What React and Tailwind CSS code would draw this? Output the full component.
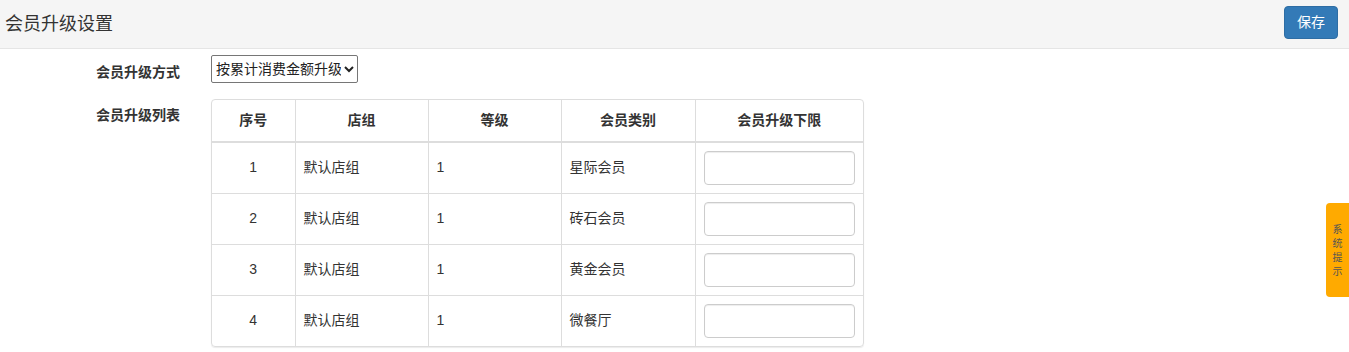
import React from 'react';

const ROWS = [
    { no: 1, group: '默认店组', level: '1', type: '星际会员' },
    { no: 2, group: '默认店组', level: '1', type: '砖石会员' },
    { no: 3, group: '默认店组', level: '1', type: '黄金会员' },
    { no: 4, group: '默认店组', level: '1', type: '微餐厅' },
];

const font = { fontFamily: '"Microsoft YaHei", "Liberation Sans", "Noto Sans CJK SC", sans-serif' };

export default function App() {
    return (
        <div className="relative w-[1349px] h-[352px] bg-white text-[#333] overflow-hidden" style={font}>
            {/* Header */}
            <div className="h-[49px] bg-[#f5f5f5] border-b border-[#e5e5e5] flex items-center justify-between pl-[5px] pr-[11px]">
                <h1 className="text-[18px] leading-none font-normal">会员升级设置</h1>
                <button className="w-[54px] h-[33px] bg-[#337ab7] border border-[#2e6da4] rounded-[4px] text-white text-[14px] mb-[4px]">
                    保存
                </button>
            </div>

            {/* Upgrade mode */}
            <div className="flex items-start mt-[6px] h-[28px]">
                <div className="w-[180px] text-right text-[14px] leading-[20px] font-bold pt-[7px]">会员升级方式</div>
                <select className="ml-[31px] w-[147px] h-[28px] border border-[#767676] rounded-[2px] text-[14px] pl-0 bg-white text-[#222]">
                    <option>按累计消费金额升级</option>
                    <option>按累计积分升级</option>
                </select>
            </div>

            {/* Upgrade list */}
            <div className="flex mt-[16px]">
                <div className="w-[180px] text-right text-[14px] leading-[20px] font-bold pt-[6px]">会员升级列表</div>
                <div className="ml-[31px] w-[653px] border border-[#ddd] rounded-[4px] overflow-hidden shadow-[0_1px_1px_rgba(0,0,0,0.08)]">
                    <table className="w-full border-collapse text-[14px] table-fixed">
                        <colgroup>
                            <col className="w-[83px]" />
                            <col className="w-[133px]" />
                            <col className="w-[133px]" />
                            <col className="w-[134px]" />
                            <col />
                        </colgroup>
                        <thead>
                            <tr className="h-[42px]">
                                {['序号', '店组', '等级', '会员类别', '会员升级下限'].map((h, i) => (
                                    <th key={h} className={`font-bold text-center border-b-2 border-[#ddd] ${i > 0 ? 'border-l' : ''}`}>
                                        {h}
                                    </th>
                                ))}
                            </tr>
                        </thead>
                        <tbody>
                            {ROWS.map((r, idx) => (
                                <tr key={r.no} className={`h-[51px] ${idx > 0 ? 'border-t border-[#ddd]' : ''}`}>
                                    <td className="text-center">{r.no}</td>
                                    <td className="border-l border-[#ddd] px-[8px]">{r.group}</td>
                                    <td className="border-l border-[#ddd] px-[8px]">{r.level}</td>
                                    <td className="border-l border-[#ddd] px-[8px]">{r.type}</td>
                                    <td className="border-l border-[#ddd] px-[8px]">
                                        <input className="block w-[151px] h-[34px] border border-[#ccc] rounded-[4px] shadow-[inset_0_1px_1px_rgba(0,0,0,0.075)] px-[12px] outline-none" />
                                    </td>
                                </tr>
                            ))}
                        </tbody>
                    </table>
                </div>
            </div>

            {/* System tip tab */}
            <div className="absolute right-0 top-[203px] w-[23px] h-[94px] bg-[#ffaa00] rounded-l-[4px] flex flex-col items-center pt-[20px] text-[10px] leading-[14px] text-[#555]">
                <span>系</span>
                <span>统</span>
                <span>提</span>
                <span>示</span>
            </div>
        </div>
    );
}
